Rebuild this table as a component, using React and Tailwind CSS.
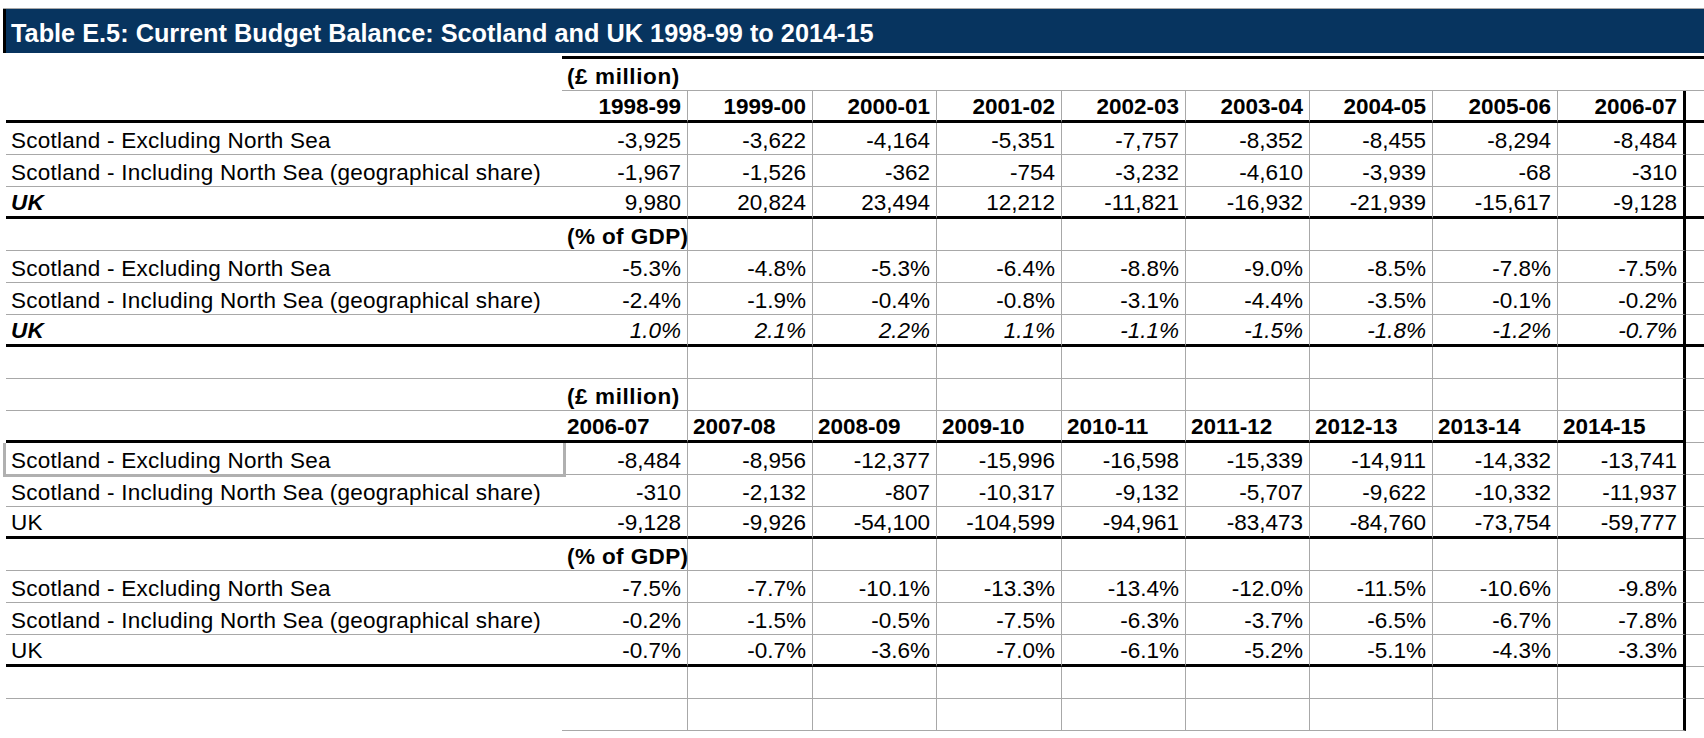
import React from 'react';

// column edges taken from the sheet: label col, nine year cols, spill col
const GRID = 'grid grid-cols-[556px_126px_125px_124px_125px_124px_124px_123px_125px_128px_1fr] h-[32px] relative';

const bottomCls = {
  none: '',
  gray: 'border-b border-b-[#a8a8a8]',
  black: 'border-b-[3px] border-b-black',
};

function Row({ label, labelCls = '', values = [], valCls = '', bottom = 'gray', labelBottom, tail, lines = true, align = 'right', children }) {
  const lb = labelBottom || bottom;
  const tb = tail || bottom;
  return (
    <div className={GRID}>
      <div className={`flex items-end pl-[5px] whitespace-nowrap tracking-[0.24px] ${bottomCls[lb]} ${labelCls}`}>{label}</div>
      {Array.from({ length: 9 }).map((_, i) => {
        let side = '';
        if (lines) side = i === 8 ? 'border-r-[3px] border-r-black' : 'border-r border-r-[#a8a8a8]';
        const al = align === 'right' ? 'justify-end pr-[6px]' : 'justify-start pl-[5px]';
        return (
          <div key={i} className={`flex items-end whitespace-nowrap ${al} ${bottomCls[bottom]} ${side} ${valCls}`}>
            {values[i]}
          </div>
        );
      })}
      <div className={bottomCls[tb]} />
      {children}
    </div>
  );
}

const upper = {
  years: ['1998-99', '1999-00', '2000-01', '2001-02', '2002-03', '2003-04', '2004-05', '2005-06', '2006-07'],
  exMil: ['-3,925', '-3,622', '-4,164', '-5,351', '-7,757', '-8,352', '-8,455', '-8,294', '-8,484'],
  inMil: ['-1,967', '-1,526', '-362', '-754', '-3,232', '-4,610', '-3,939', '-68', '-310'],
  ukMil: ['9,980', '20,824', '23,494', '12,212', '-11,821', '-16,932', '-21,939', '-15,617', '-9,128'],
  exPct: ['-5.3%', '-4.8%', '-5.3%', '-6.4%', '-8.8%', '-9.0%', '-8.5%', '-7.8%', '-7.5%'],
  inPct: ['-2.4%', '-1.9%', '-0.4%', '-0.8%', '-3.1%', '-4.4%', '-3.5%', '-0.1%', '-0.2%'],
  ukPct: ['1.0%', '2.1%', '2.2%', '1.1%', '-1.1%', '-1.5%', '-1.8%', '-1.2%', '-0.7%'],
};

const lower = {
  years: ['2006-07', '2007-08', '2008-09', '2009-10', '2010-11', '2011-12', '2012-13', '2013-14', '2014-15'],
  exMil: ['-8,484', '-8,956', '-12,377', '-15,996', '-16,598', '-15,339', '-14,911', '-14,332', '-13,741'],
  inMil: ['-310', '-2,132', '-807', '-10,317', '-9,132', '-5,707', '-9,622', '-10,332', '-11,937'],
  ukMil: ['-9,128', '-9,926', '-54,100', '-104,599', '-94,961', '-83,473', '-84,760', '-73,754', '-59,777'],
  exPct: ['-7.5%', '-7.7%', '-10.1%', '-13.3%', '-13.4%', '-12.0%', '-11.5%', '-10.6%', '-9.8%'],
  inPct: ['-0.2%', '-1.5%', '-0.5%', '-7.5%', '-6.3%', '-3.7%', '-6.5%', '-6.7%', '-7.8%'],
  ukPct: ['-0.7%', '-0.7%', '-3.6%', '-7.0%', '-6.1%', '-5.2%', '-5.1%', '-4.3%', '-3.3%'],
};

const EX = 'Scotland - Excluding North Sea';
const IN = 'Scotland - Including North Sea (geographical share)';

export default function App() {
  return (
    <div className="w-[1704px] h-[738px] bg-white pt-[8px] text-black font-['Liberation_Sans',Arial,sans-serif] overflow-hidden">
      <div className="h-px ml-[3px] bg-[#a8a8a8]" />
      <div className="h-[44px] ml-[3px] bg-[#07345f] border-l-[3px] border-l-black flex items-end pb-[5px] pl-[5px] text-white font-bold text-[25.3px] leading-[30px] whitespace-nowrap">
        Table E.5: Current Budget Balance: Scotland and UK 1998-99 to 2014-15
      </div>

      <div className="mt-[3px] ml-[6px] text-[22.5px] leading-[26px]">
        <div className="ml-[556px] h-[3px] bg-black" />
        <Row values={['(£ million)']} valCls="font-bold tracking-[0.6px]" align="left" lines={false} labelBottom="none" />
        <Row values={upper.years} valCls="font-bold" bottom="black" />
        <Row label={EX} values={upper.exMil} />
        <Row label={IN} values={upper.inMil} />
        <Row label="UK" labelCls="font-bold italic" values={upper.ukMil} bottom="black" />
        <Row values={['(% of GDP)']} valCls="font-bold tracking-[0.4px]" align="left" />
        <Row label={EX} values={upper.exPct} />
        <Row label={IN} values={upper.inPct} />
        <Row label="UK" labelCls="font-bold italic" values={upper.ukPct} valCls="italic" bottom="black" />

        <Row />
        <Row values={['(£ million)']} valCls="font-bold tracking-[0.6px]" align="left" />
        <Row values={lower.years} valCls="font-bold" align="left" bottom="black" tail="gray" />
        <Row label={EX} values={lower.exMil}>
          <div className="absolute left-[-3px] top-0 bottom-[-2px] w-[563px] border-x-[3px] border-b-[3px] border-[#b0b0b0]" />
        </Row>
        <Row label={IN} values={lower.inMil} />
        <Row label="UK" values={lower.ukMil} bottom="black" tail="gray" />
        <Row values={['(% of GDP)']} valCls="font-bold tracking-[0.4px]" align="left" />
        <Row label={EX} values={lower.exPct} />
        <Row label={IN} values={lower.inPct} />
        <Row label="UK" values={lower.ukPct} bottom="black" tail="gray" />
        <Row />
        <Row labelBottom="none" tail="none" />
      </div>
    </div>
  );
}
